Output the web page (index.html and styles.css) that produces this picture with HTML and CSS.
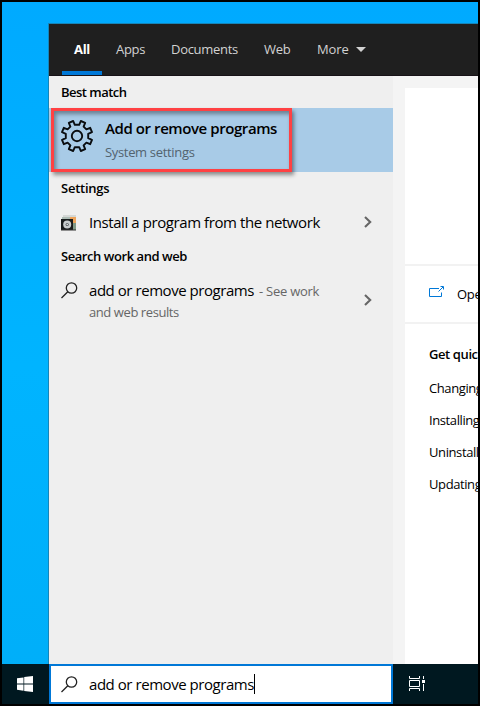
FILE: index.html
```html
<!DOCTYPE html>
<html lang="en">
<head>
<meta charset="utf-8">
<title>Search</title>
<link rel="stylesheet" href="styles.css">
</head>
<body>
<div class="screen">
  <main class="panel">
    <nav class="tabs">
      <div class="tab tab-all active"><span>All</span></div>
      <div class="tab tab-apps"><span>Apps</span></div>
      <div class="tab tab-docs"><span>Documents</span></div>
      <div class="tab tab-web"><span>Web</span></div>
      <div class="tab tab-more"><span>More</span><svg width="10" height="5" viewBox="0 0 10 5"><path d="M0 0H10L5 5Z" fill="#d2d2d2"/></svg></div>
    </nav>
    <div class="content">
      <section class="results">
        <h2 class="heading best"><span>Best match</span></h2>
        <div class="match">
          <svg class="gear" width="34" height="34" viewBox="-17 -17 34 34" fill="none" stroke="#0a0d10" stroke-width="1.9" stroke-linejoin="round">
            <path d="M-2.2 -11.2L-3.8 -15L-8.2 -13.2L-6.6 -9.4L-9.4 -6.6L-13.2 -8.2L-15 -3.8L-11.2 -2.2V2.2L-15 3.8L-13.2 8.2L-9.4 6.6L-6.6 9.4L-8.2 13.2L-3.8 15L-2.2 11.2H2.2L3.8 15L8.2 13.2L6.6 9.4L9.4 6.6L13.2 8.2L15 3.8L11.2 2.2V-2.2L15 -3.8L13.2 -8.2L9.4 -6.6L6.6 -9.4L8.2 -13.2L3.8 -15L2.2 -11.2Z"/>
            <circle r="5.2"/>
          </svg>
          <div class="match-text">
            <div class="match-title"><span>Add or remove programs</span></div>
            <div class="match-sub"><span>System settings</span></div>
          </div>
          <div class="highlight"></div>
        </div>
        <h2 class="heading settings"><span>Settings</span></h2>
        <div class="row install">
          <svg class="row-icon" width="16" height="17" viewBox="0 0 16 17">
            <path d="M2 1H15V4H2Z" fill="#d5d8d6"/><path d="M1 3H9V6H1Z" fill="#aebcb5"/>
            <path d="M9 3H15V10H9Z" fill="#eda45c"/><path d="M11 9H15V16H11Z" fill="#829a87"/>
            <path d="M0 5H12V16H0Z" fill="#181b1c"/><circle cx="6.2" cy="10.5" r="4" fill="#c8cdce"/>
            <circle cx="6.2" cy="10.5" r="1.6" fill="#555b5e"/><circle cx="6.2" cy="10.5" r=".7" fill="#fff"/>
            <path d="M0 16H15" stroke="#333" stroke-width="1"/>
          </svg>
          <span class="row-title">Install a program from the network</span>
          <svg class="chevron" width="8" height="12" viewBox="0 0 8 12"><path d="M1 1L6.2 6L1 11" fill="none" stroke="#666" stroke-width="2.1"/></svg>
        </div>
        <h2 class="heading search-heading"><span>Search work and web</span></h2>
        <div class="row websearch">
          <svg class="row-icon lens" width="17" height="17" viewBox="0 0 17 17" fill="none" stroke="#222" stroke-width="1.3"><circle cx="10.5" cy="6" r="5.2"/><path d="M6.8 9.7L.5 16"/></svg>
          <div class="web-text">
            <div class="line"><span class="query">add or remove programs</span><span class="hint">- See work</span></div>
            <div class="line second"><span class="hint-two">and web results</span></div>
          </div>
          <svg class="chevron" width="8" height="12" viewBox="0 0 8 12"><path d="M1 1L6.2 6L1 11" fill="none" stroke="#666" stroke-width="2.1"/></svg>
        </div>
      </section>
      <aside class="preview">
        <div class="hero"></div>
        <div class="open">
          <svg width="16" height="12" viewBox="0 0 16 12" fill="none" stroke="#0078d7"><path d="M10 2.5H.5V10.5H12.5V6.5M9.5 5.5L14 1M11.5 .5H14.5V3.5"/></svg>
          <span>Open</span>
        </div>
        <div class="quick">
          <h3><span>Get quick</span></h3>
          <p><span>Changing</span></p>
          <p><span>Installing</span></p>
          <p><span>Uninstall</span></p>
          <p><span>Updating</span></p>
        </div>
      </aside>
    </div>
  </main>
  <footer class="taskbar">
    <div class="start"><svg width="16" height="16" viewBox="0 0 16 16" fill="#fff"><path d="M0 2.3L6.5 1.4V7.5H0ZM7.2 1.1L16 0V7.5H7.2ZM0 8.4H6.5V14.7L0 13.8ZM7.2 8.4H16V16L7.2 14.9Z"/></svg></div>
    <div class="searchbox">
      <svg class="lens" width="17" height="17" viewBox="0 0 17 17" fill="none" stroke="#222" stroke-width="1.3"><circle cx="10.5" cy="6" r="5.2"/><path d="M6.8 9.7L.5 16"/></svg>
      <span class="query">add or remove programs</span><i class="caret"></i>
    </div>
    <div class="taskview"><svg width="16" height="15" viewBox="0 0 16 15" fill="none" stroke="#fff"><path d="M.5 0V2.5H10.5V0M.5 4.5H10.5V10.5H.5ZM.5 15V12.5H10.5V15M14.5 0V3M14.5 8V15"/><path d="M13 4H16V7H13Z" fill="#fff" stroke="none"/></svg></div>
  </footer>
</div>
</body>
</html>
```
FILE: styles.css
```css
* { box-sizing: border-box; }
body { margin: 0; background: #000; font-family: "Open Sans", sans-serif; color: #000; }
svg { display: block; flex: none; }
span { white-space: nowrap; }
h2, h3, p { margin: 0; }
.screen {
  width: 480px; height: 706px; border: 2px solid #000; overflow: hidden;
  display: flex; flex-direction: column;
  background: linear-gradient(#00aaff, #00b4ff 52%, #00aef8);
}
.panel {
  height: 641px; margin: 21px 0 0 46px; flex: none;
  border: solid #1685b8; border-width: 1px 0 0 1px;
  display: flex; flex-direction: column;
}
.tabs {
  height: 52px; flex: none; display: flex; background: #1f1f1f; padding-left: 13px;
  border-bottom: 1px solid #171217; color: #d2d2d2; font-size: 13px; letter-spacing: -.3px;
}
.tab { height: 51px; display: flex; align-items: center; flex: none; padding-bottom: 1px; }
.tab-all { width: 40px; justify-content: center; color: #fff; font-weight: 700; border-bottom: 4px solid #0078d7; padding: 3px 0 0; }
.tab-apps { width: 55px; margin-left: 14px; }
.tab-docs { width: 93px; }
.tab-web { width: 53px; }
.tab-more { gap: 7px; }
.tab-more span { letter-spacing: -.1px; }
.content { flex: 1; display: flex; min-height: 0; }
.results { width: 344px; flex: none; background: #efefef; }
.heading { padding-left: 12px; font-size: 13px; font-weight: 600; letter-spacing: -.44px; display: flex; align-items: center; }
.best { height: 32px; letter-spacing: -.52px; }
.match { height: 64px; background: #a8cbe7; position: relative; display: flex; align-items: flex-start; padding: 11px 0 0 11px; }
.match-text { margin-left: 11px; margin-top: -1px; }
.match-title { height: 20px; line-height: 20px; font-size: 15px; font-weight: 600; letter-spacing: -.42px; }
.match-sub { height: 20px; line-height: 20px; font-size: 13px; color: #53636f; margin-top: 4px; letter-spacing: -.33px; }
.highlight {
  position: absolute; left: 2px; top: 0; width: 241px; height: 64px; border: 3px solid #ff4143;
  box-shadow: 2px 3px 4px rgba(0,0,0,.42), inset 2px 3px 4px rgba(0,0,0,.38);
}
.settings { height: 34px; padding-bottom: 2px; letter-spacing: -.25px; }
.row { display: flex; padding-left: 12px; }
.install { height: 34px; align-items: center; padding-bottom: 2px; }
.row-title { width: 275px; margin-left: 12px; font-size: 15px; letter-spacing: -.42px; }
.search-heading { height: 34px; padding-bottom: 2px; }
.websearch { height: 77px; padding-top: 7px; }
.websearch .lens { margin-top: 1px; }
.web-text { width: 275px; margin: -1px 0 0 11px; }
.websearch .chevron { margin-top: 13px; }
.line { display: flex; height: 20px; line-height: 20px; align-items: baseline; }
.second { margin-top: 2px; }
.query { font-size: 15px; letter-spacing: -.45px; }
.hint { margin-left: 5px; }
.hint, .hint-two { font-size: 13px; color: #666; letter-spacing: -.25px; }
.hint-two { letter-spacing: -.42px; }
.preview { flex: 1; min-width: 0; background: #f4f4f4; padding: 12px 0 0 12px; overflow: hidden; }
.hero { height: 176px; background: #fff; }
.open { height: 60px; border: solid #f2f2f2; border-width: 2px 0; background: #fff; display: flex; align-items: center; padding-left: 24px; font-size: 13px; letter-spacing: -.3px; }
.open span { margin-left: 12px; }
.open svg { margin-top: -4px; }
.quick { height: 340px; background: #fff; padding: 14px 0 0 24px; overflow: hidden; font-size: 13px; letter-spacing: -.4px; }
.quick h3 { font-size: 13px; font-weight: 600; height: 34px; line-height: 33px; }
.quick p { height: 32px; line-height: 32px; }
.taskbar { height: 40px; flex: none; display: flex; background: #001820; }
.start { width: 47px; padding-right: 1px; display: flex; align-items: center; justify-content: center; }
.searchbox { width: 344px; border: 2px solid #0078d7; background: #fff; display: flex; align-items: center; padding-left: 10px; }
.searchbox .query { margin-left: 11px; }
.caret { width: 1px; height: 20px; background: #000; }
.taskview { padding: 12px 0 0 16px; }
```
